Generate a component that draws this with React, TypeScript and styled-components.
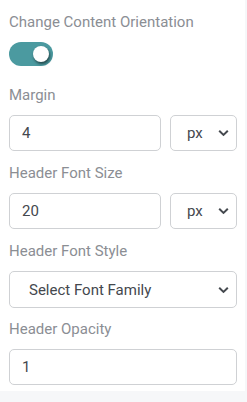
import React, { useState } from "react";
import styled, { createGlobalStyle } from "styled-components";

const GlobalStyle = createGlobalStyle`
	html, body {
		margin: 0;
		padding: 0;
		background: #f6f7f9;
		font-family: Roboto, "Liberation Sans", sans-serif;
	}
`;

const Panel = styled.div`
	width: 245px;
	box-sizing: border-box;
	background: #fff;
	padding: 12px 8px 6px 9px;
	display: flex;
	flex-direction: column;
`;

const Field = styled.div<{ $after?: number }>`
	display: flex;
	flex-direction: column;
	margin-bottom: ${(p) => (p.$after ?? 12)}px;
	&:last-child {
		margin-bottom: 0;
	}
`;

const Label = styled.label`
	font-size: 15px;
	line-height: 20px;
	color: #8b8e94;
	margin-bottom: 10px;
`;

const Row = styled.div`
	display: flex;
	gap: 9px;

	& > input {
		flex: 1;
	}
`;

const Input = styled.input`
	width: 100%;
	min-width: 0;
	height: 36px;
	box-sizing: border-box;
	border: 1px solid #cfd1d4;
	border-radius: 5px;
	padding: 0 12px;
	font-family: Roboto, "Liberation Sans", sans-serif;
	font-size: 15px;
	color: #44484e;
	background: #fff;
	outline: none;
`;

const SelectWrap = styled.div<{ $width?: number }>`
	position: relative;
	${(p) => (p.$width ? `width: ${p.$width}px; flex: none;` : "")}

	svg {
		position: absolute;
		right: 8px;
		top: 50%;
		transform: translateY(-50%);
		pointer-events: none;
	}
`;

const Select = styled.select<{ $inset: number; $tall?: boolean }>`
	appearance: none;
	width: 100%;
	height: ${(p) => (p.$tall ? 37 : 36)}px;
	box-sizing: border-box;
	border: 1px solid #cfd1d4;
	border-radius: 5px;
	padding: 0 26px 0 ${(p) => p.$inset}px;
	font-family: Roboto, "Liberation Sans", sans-serif;
	font-size: 15px;
	color: #44484e;
	background: #fff;
	outline: none;
`;

const Track = styled.button<{ $on: boolean }>`
	width: 44px;
	height: 24px;
	border: none;
	border-radius: 12px;
	background: ${(p) => (p.$on ? "#4b9aa0" : "#c9ccd1")};
	display: flex;
	align-items: center;
	justify-content: ${(p) => (p.$on ? "flex-end" : "flex-start")};
	padding: 0 4px;
	box-sizing: border-box;
	cursor: pointer;
`;

const Knob = styled.span`
	width: 16px;
	height: 16px;
	border-radius: 50%;
	background: #fff;
	box-shadow: 1px 2px 3px rgba(0, 0, 0, 0.55);
`;

const Chevron = () => (
	<svg width="11" height="7" viewBox="0 0 11 7">
		<path d="M1.2 1.2 L5.5 5.4 L9.8 1.2" fill="none" stroke="#45494f" strokeWidth="2" />
	</svg>
);

const UnitSelect = ({ value }: { value: string }) => (
	<SelectWrap $width={67}>
		<Select $inset={16} defaultValue={value}>
			<option value="px">px</option>
			<option value="em">em</option>
			<option value="%">%</option>
		</Select>
		<Chevron />
	</SelectWrap>
);

const App = () => {
	const [on, setOn] = useState(true);

	return (
		<>
			<GlobalStyle />
			<Panel>
				<Field $after={19}>
					<Label>Change Content Orientation</Label>
					<Track $on={on} onClick={() => setOn(!on)}>
						<Knob />
					</Track>
				</Field>

				<Field>
					<Label>Margin</Label>
					<Row>
						<Input defaultValue="4" />
						<UnitSelect value="px" />
					</Row>
				</Field>

				<Field>
					<Label>Header Font Size</Label>
					<Row>
						<Input defaultValue="20" />
						<UnitSelect value="px" />
					</Row>
				</Field>

				<Field $after={11}>
					<Label>Header Font Style</Label>
					<SelectWrap>
						<Select $inset={19} $tall defaultValue="">
							<option value="">Select Font Family</option>
							<option value="roboto">Roboto</option>
							<option value="lato">Lato</option>
						</Select>
						<Chevron />
					</SelectWrap>
				</Field>

				<Field>
					<Label>Header Opacity</Label>
					<Input defaultValue="1" />
				</Field>
			</Panel>
		</>
	);
};

export default App;
